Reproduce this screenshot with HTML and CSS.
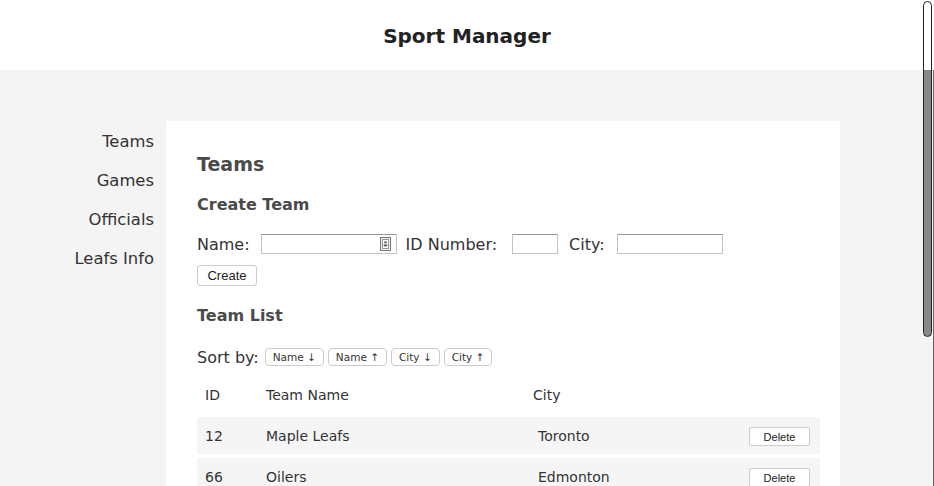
FILE: index.html
```html
<!DOCTYPE html>
<html>
<head>
<meta charset="utf-8">
<link rel="stylesheet" href="styles.css">
</head>
<body>
<header class="top">
  <h1 class="title">Sport Manager</h1>
</header>
<div class="layout">
  <nav class="side">
    <a class="side-link">Teams</a>
    <a class="side-link">Games</a>
    <a class="side-link">Officials</a>
    <a class="side-link">Leafs Info</a>
  </nav>
  <main class="card">
    <h2 class="h-page">Teams</h2>
    <h3 class="h-sec">Create Team</h3>
    <div class="form-row">
      <label class="lbl lbl-name">Name:</label>
      <span class="field-wrap">
        <input class="inp inp-name" type="text">
        <svg class="autofill" width="11" height="14" viewBox="0 0 11 14"><rect x="0.5" y="0.5" width="10" height="13" fill="#eee" stroke="#777"/><rect x="2.5" y="2.5" width="6" height="9" fill="#fff" stroke="#999"/><circle cx="5.5" cy="5.2" r="1.3" fill="#666"/><rect x="3.7" y="7.3" width="3.6" height="2.2" fill="#666"/></svg>
      </span>
      <label class="lbl lbl-id">ID Number:</label>
      <input class="inp inp-id" type="text">
      <label class="lbl lbl-city">City:</label>
      <input class="inp inp-city" type="text">
    </div>
    <button class="btn btn-create">Create</button>
    <h3 class="h-sec h-list">Team List</h3>
    <div class="sort-row">
      <span class="sort-lbl">Sort by:</span>
      <button class="btn btn-sm">Name ↓</button>
      <button class="btn btn-sm">Name ↑</button>
      <button class="btn btn-sm">City ↓</button>
      <button class="btn btn-sm">City ↑</button>
    </div>
    <div class="tbl">
      <div class="tr th">
        <span class="c-id">ID</span>
        <span class="c-name">Team Name</span>
        <span class="c-city">City</span>
        <span class="c-act"></span>
      </div>
      <div class="tr row">
        <span class="c-id">12</span>
        <span class="c-name">Maple Leafs</span>
        <span class="c-city">Toronto</span>
        <span class="c-act"><button class="btn btn-del">Delete</button></span>
      </div>
      <div class="tr row">
        <span class="c-id">66</span>
        <span class="c-name">Oilers</span>
        <span class="c-city">Edmonton</span>
        <span class="c-act"><button class="btn btn-del">Delete</button></span>
      </div>
    </div>
  </main>
</div>
<div class="scroll-track"></div>
<div class="scroll-thumb"></div>
</body>
</html>
```
FILE: styles.css
```css
html, body {
  margin: 0;
  padding: 0;
}
body {
  background: #f4f4f4;
  font-family: "DejaVu Sans", Verdana, sans-serif;
  color: #333;
}
.top {
  background: #fff;
  height: 70px;
  display: flex;
  align-items: center;
  justify-content: center;
}
.title {
  margin: 0;
  font-size: 20px;
  font-weight: 700;
  color: #222;
  line-height: 26px;
  padding-top: 2px;
}
.layout {
  display: flex;
  padding: 51px 0 50px 0;
}
.side {
  width: 166px;
  display: flex;
  flex-direction: column;
  align-items: flex-end;
  gap: 17px;
  padding-top: 10px;
  padding-right: 12px;
  box-sizing: border-box;
  flex: none;
}
.side-link {
  font-size: 16.4px;
  line-height: 22px;
  color: #333;
}
.card {
  width: 674px;
  min-height: 534px;
  background: #fff;
  padding: 30px 20px 20px 31px;
  box-sizing: border-box;
  flex: none;
}
.h-page {
  margin: 0;
  font-size: 19px;
  font-weight: 700;
  line-height: 24px;
  color: #4a4a4a;
  padding-top: 1px;
}
.h-sec {
  margin: 18px 0 0;
  font-size: 16px;
  font-weight: 700;
  line-height: 22px;
  color: #4a4a4a;
}
.form-row {
  display: flex;
  align-items: center;
  margin-top: 18px;
  height: 20px;
}
.lbl {
  font-size: 16px;
}
.lbl-name { margin-right: 11px; }
.lbl-id { margin-right: 15px; }
.lbl-city { margin-right: 12px; }
.field-wrap {
  position: relative;
  display: inline-block;
  margin-right: 9px;
  height: 20px;
}
.inp {
  height: 20px;
  box-sizing: border-box;
  border: 1px solid #c4c4c4;
  border-top-color: #999;
  margin: 0;
  padding: 1px 3px;
  font-size: 13px;
  display: block;
}
.inp-name { width: 136px; }
.inp-id { width: 46px; margin-right: 11px; }
.inp-city { width: 106px; }
.autofill {
  position: absolute;
  right: 6px;
  top: 3px;
}
.btn {
  background: #fff;
  border: 1px solid #ccc;
  border-radius: 3px;
  font-family: "Liberation Sans", Arial, sans-serif;
  color: #222;
  margin: 0;
  cursor: pointer;
}
.btn-create {
  display: block;
  margin-top: 11px;
  height: 21px;
  width: 60px;
  font-size: 13px;
  padding: 0;
}
.h-list {
  margin-top: 19px;
}
.sort-row {
  display: flex;
  align-items: center;
  gap: 4px;
  margin-top: 19px;
  height: 22px;
}
.sort-lbl {
  font-size: 16px;
  margin-right: 2px;
}
.btn-sm {
  height: 18px;
  font-family: "DejaVu Sans", Verdana, sans-serif;
  font-size: 10.5px;
  padding: 0 7px;
  border-radius: 4px;
  color: #333;
}
.tbl {
  margin-top: 8px;
  display: flex;
  flex-direction: column;
  gap: 4px;
}
.tr {
  display: flex;
  align-items: center;
  height: 37px;
  font-size: 14px;
  padding-left: 8px;
  padding-right: 10px;
}
.row {
  background: #f5f5f5;
  border-radius: 3px;
}
.c-id { width: 61px; }
.c-name { width: 267px; }
.c-city { flex: 1; }
.row .c-city { padding-left: 5px; }
.c-act { display: flex; padding-top: 2px; }
.btn-del {
  width: 61px;
  height: 19px;
  font-size: 11px;
  padding: 0;
  border-radius: 2px;
}
.scroll-track {
  position: fixed;
  right: 0;
  top: 70px;
  bottom: 0;
  width: 1px;
  background: #666;
}
.scroll-thumb {
  position: fixed;
  right: 2px;
  top: 1px;
  width: 9px;
  height: 336px;
  border-radius: 5px;
  box-sizing: border-box;
  border: 1px solid #222;
  background: linear-gradient(#fff 0 68px, #888 68px);
}
```
